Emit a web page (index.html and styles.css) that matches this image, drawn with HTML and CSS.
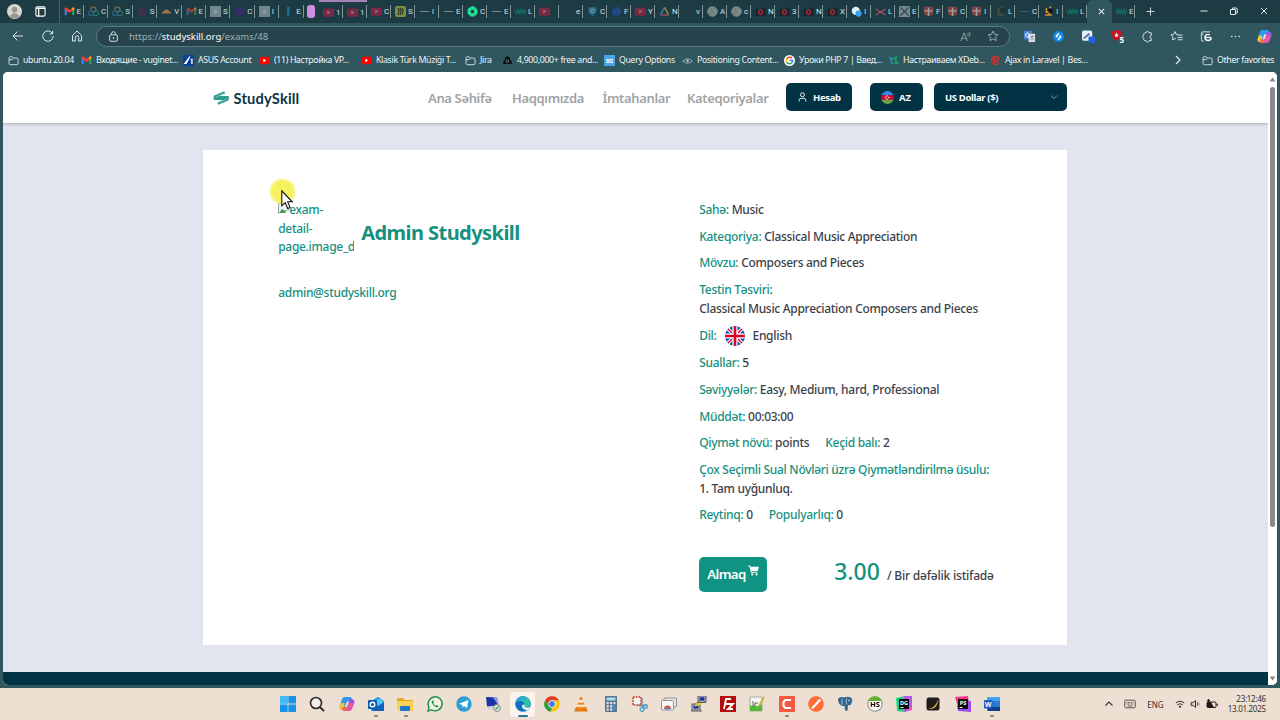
FILE: index.html
```
<!DOCTYPE html>
<html lang="az">
<head>
  <meta charset="UTF-8">
  <title>StudySkill</title>
  <link rel="stylesheet" href="styles.css">
</head>
<body>

  <!-- icons -->
  <svg class="sprite">
    <symbol id="folder" viewBox="0 0 16 16"><path d="M1.500 4.500a2 2 0 0 1 2-2h2.600l1.800 2h5a1.800 1.800 0 0 1 1.800 1.800v6a1.800 1.800 0 0 1-1.800 1.800H3.500a2 2 0 0 1-2-2zM1.500 6.800h4.800l1.600-2" fill="none" stroke="#dce8ea" stroke-width="1.300"/></symbol>
    <symbol id="gmail" viewBox="0 0 16 16"><path d="M1 13V4.500l3 2.200V13z" fill="#4285f4"/><path d="M12 13V6.700l3-2.200V13z" fill="#34a853"/><path d="M1 5V3.500C1 2 2.800 1.800 4 2.600l4 3.200 4-3.200c1.200-.8 3-.6 3 .9V5l-7 5.200z" fill="#ea4335"/><path d="M12 6.700V2.600c1.500-1 3-.4 3 1.200v.8z" fill="#fbbc04"/></symbol>
    <symbol id="youtube" viewBox="0 0 16 16"><rect x="0" y="2.500" width="16" height="11" rx="3" fill="#f00"/><path d="M6.300 5.500v5l4.200-2.500z" fill="#fff"/></symbol>
    <symbol id="yt-dim" viewBox="0 0 16 16"><rect x="0" y="2" width="16" height="12" rx="2.500" fill="#bb1c4a"/><path d="M6.300 5.500v5l4.200-2.500z" fill="#e7a3b5"/></symbol>
    <symbol id="rings" viewBox="0 0 16 16"><g fill="none" stroke-width="1.700"><circle cx="8" cy="5" r="3.600" stroke="#c4933c"/><circle cx="4.500" cy="10.500" r="3.600" stroke="#2f86a8"/><circle cx="11.500" cy="10.500" r="3.600" stroke="#2a9a8c"/></g></symbol>
    <symbol id="slack" viewBox="0 0 16 16"><path d="M11 3H6a2.500 2.500 0 0 0 0 5h4a2.500 2.500 0 0 1 0 5H4" fill="none" stroke="#7d1c60" stroke-width="2.600"/></symbol>
    <symbol id="cloud" viewBox="0 0 16 16"><path d="M1 11c0-3 2-3 3-3 1-4 7-4 8 0 2 0 3 1 3 3z" fill="#f5a04a"/></symbol>
    <symbol id="square" viewBox="0 0 16 16"><rect width="16" height="16" fill="#a9b8bc"/><path d="M5 8h6M8 5v6" stroke="#dfe6e8" stroke-width="2"/></symbol>
    <symbol id="cross" viewBox="0 0 16 16"><rect width="16" height="16" fill="#b3bdc0"/><path d="M2 2l12 12M14 2L2 14" stroke="#3a4c50" stroke-width="2"/></symbol>
    <symbol id="purple" viewBox="0 0 16 16"><rect x="1" y="3" width="14" height="10" fill="#4c2386"/></symbol>
    <symbol id="bar" viewBox="0 0 16 16"><path d="M6 1h4l-1 14H6z" fill="#1e8fc0"/></symbol>
    <symbol id="dash" viewBox="0 0 16 16"><path d="M1 8h14" stroke="#b3c4c8" stroke-width="1.500"/></symbol>
    <symbol id="miro" viewBox="0 0 16 16"><rect width="16" height="16" rx="3" fill="#c5c442"/><path d="M4 3l2 4-2 6M7 3l2 4-2 6M10 3l2 4-2 6" fill="none" stroke="#1e2d18" stroke-width="1.600"/></symbol>
    <symbol id="flower" viewBox="0 0 16 16"><circle cx="8" cy="8" r="5" fill="none" stroke="#1fe39a" stroke-width="5" stroke-dasharray="5 .3"/></symbol>
    <symbol id="wave" viewBox="0 0 16 16"><path d="M0 5l2 6 2-6 2 6 2-6 2 6 2-6 2 6 2-6" fill="none" stroke="#148a78" stroke-width="2"/></symbol>
    <symbol id="shield" viewBox="0 0 16 16"><path d="M2 2l6-1 6 1v7l-6 6-6-6z" fill="#2c86b5"/><circle cx="8" cy="7" r="2.600" fill="none" stroke="#c2e2f2" stroke-width="1.500"/></symbol>
    <symbol id="blob" viewBox="0 0 16 16"><circle cx="8" cy="8" r="7" fill="#1e4ea6"/><path d="M4 10c2-5 6-5 8 0" stroke="#3a6fc4" fill="none" stroke-width="1.500"/></symbol>
    <symbol id="drive" viewBox="0 0 16 16"><path d="M8 2L2 13" stroke="#4f9ee0" stroke-width="2.400"/><path d="M8 2l6 11" stroke="#e0b43c" stroke-width="2.400"/><path d="M2 13h12" stroke="#d05a6e" stroke-width="2.400"/></symbol>
    <symbol id="gpt" viewBox="0 0 16 16"><circle cx="8" cy="8" r="6.800" fill="#9aa39a" stroke="#e9eee0" stroke-width="1.400"/><circle cx="8" cy="8" r="3.500" fill="none" stroke="#fff" stroke-width="1.400" stroke-dasharray="2.500 1"/></symbol>
    <symbol id="camera" viewBox="0 0 16 16"><path d="M1 5h8l4-3 1 3h1v9H1z" fill="#14100f"/><circle cx="8" cy="9" r="3" fill="none" stroke="#ff2a44" stroke-width="2"/></symbol>
    <symbol id="drops" viewBox="0 0 16 16"><circle cx="7" cy="7" r="6" fill="#dff0fa"/><circle cx="11" cy="11" r="4.500" fill="#3aa0ea"/></symbol>
    <symbol id="redx" viewBox="0 0 16 16"><path d="M1 4l7 5 7-5M1 13l7-5 7 5" fill="none" stroke="#ff5f78" stroke-width="1.800"/></symbol>
    <symbol id="crest" viewBox="0 0 16 16"><path d="M1 1h14v8c0 4-4 5-7 6-3-1-7-2-7-6z" fill="#c4483e"/><path d="M8 2v12M2 7h12" stroke="#f2e6df" stroke-width="2"/></symbol>
    <symbol id="stack" viewBox="0 0 16 16"><path d="M3 13h10M5 3v6h4v4M9 2h3" fill="none" stroke="#de8d2e" stroke-width="2.200"/><rect x="8" y="4" width="6" height="6" fill="#151515"/></symbol>
    <symbol id="blank" viewBox="0 0 16 16"></symbol>
    <symbol id="google" viewBox="0 0 16 16"><circle cx="8" cy="8" r="8" fill="#fff"/><g fill="none" stroke-width="2.200"><path d="M11.500 4.800A4.700 4.700 0 0 0 4 5.500" stroke="#ea4335"/><path d="M4 5.500a4.700 4.700 0 0 0 0 5" stroke="#fbbc05"/><path d="M4 10.500a4.700 4.700 0 0 0 7 1" stroke="#34a853"/><path d="M8 8h4.700a4.700 4.700 0 0 1-1.700 3.500" stroke="#4285f4"/></g></symbol>
    <symbol id="copilot" viewBox="0 0 16 16"><path d="M5.500 1H11q1.500 0 2 2l.5 2H10L7 12q-.8 2-2.500 2H3q-3 0-2.300-4L3 3q.7-2 2.500-2z" fill="#2f9be8"/><path d="M2 7h3.500l-.5 7q-4 1-4.500-3z" fill="#f2c43a"/><path d="M10.500 15H5q-1.500 0-2-2h3L9 5q.8-1.500 2.500-1.500H13q3 0 2.300 4L13 13q-.7 2-2.500 2z" fill="#e05aa8"/><path d="M9 5q.8-1.500 2.500-1.500H13q3 0 2.300 3.500H8.500z" fill="#8c5ce6"/><path d="M3.500 11H8l-1.500 4H5q-1.500 0-2-2z" fill="#f2703c"/><path d="M10 5.500L7.800 11H6L8 5.500z" fill="#f6ece8"/></symbol>
  </svg>

  <div class="browser">
    <div class="tabbar">
      <div class="profile">
        <svg viewBox="0 0 16 16"><circle cx="8" cy="8" r="8" fill="#d9d5d2"/><circle cx="8" cy="6" r="3" fill="#9a9492"/><path d="M3 13.500c1-5 9-5 10 0-3 2.400-7 2.400-10 0z" fill="#9a9492"/></svg>
      </div>
      <div class="workspace">
        <svg viewBox="0 0 12 12"><rect x="1" y="1" width="10" height="10" rx="1.500" fill="none" stroke="#fff" stroke-width="1.200"/><path d="M1 2.700h10M4 3v8" stroke="#fff" stroke-width="1.400"/></svg>
      </div>
      <div class="tabs first">
        <div class="tab bright"><svg><use href="#gmail"/></svg><span>E</span></div>
        <div class="tab"><svg><use href="#rings"/></svg><span>C</span></div>
        <div class="tab"><svg><use href="#rings"/></svg><span>S</span></div>
        <div class="tab"><svg><use href="#slack"/></svg><span>S</span></div>
        <div class="tab"><svg><use href="#cloud"/></svg><span>V</span></div>
        <div class="tab"><svg><use href="#gmail"/></svg><span>E</span></div>
        <div class="tab"><svg><use href="#square"/></svg><span>S</span></div>
        <div class="tab"><svg><use href="#purple"/></svg><span>C</span></div>
        <div class="tab"><svg><use href="#square"/></svg><span>I</span></div>
        <div class="tab"><svg><use href="#bar"/></svg><span>E</span></div>
      </div>
      <div class="group-pill"></div>
      <div class="tabs second">
        <div class="tab grouped"><svg><use href="#yt-dim"/></svg><span>1</span></div>
        <div class="tab grouped"><svg><use href="#yt-dim"/></svg><span>1</span></div>
        <div class="tab"><svg><use href="#yt-dim"/></svg><span>C</span></div>
        <div class="tab"><svg><use href="#miro"/></svg><span>S</span></div>
        <div class="tab"><svg><use href="#dash"/></svg><span>l</span></div>
        <div class="tab"><svg><use href="#dash"/></svg><span>E</span></div>
        <div class="tab bright"><svg><use href="#flower"/></svg><span>C</span></div>
        <div class="tab"><svg><use href="#dash"/></svg><span>E</span></div>
        <div class="tab"><svg><use href="#wave"/></svg><span>L</span></div>
        <div class="tab"><svg><use href="#yt-dim"/></svg><span></span></div>
        <div class="tab"><svg><use href="#blank"/></svg><span>e</span></div>
        <div class="tab"><svg><use href="#shield"/></svg><span>C</span></div>
        <div class="tab"><svg><use href="#blob"/></svg><span>F</span></div>
        <div class="tab"><svg><use href="#yt-dim"/></svg><span>Y</span></div>
        <div class="tab"><svg><use href="#drive"/></svg><span>N</span></div>
        <div class="tab"><svg><use href="#blank"/></svg><span>v</span></div>
        <div class="tab"><svg><use href="#gpt"/></svg><span>A</span></div>
        <div class="tab"><svg><use href="#gpt"/></svg><span>c</span></div>
        <div class="tab"><svg><use href="#camera"/></svg><span>N</span></div>
        <div class="tab"><svg><use href="#camera"/></svg><span>3</span></div>
        <div class="tab"><svg><use href="#camera"/></svg><span>N</span></div>
        <div class="tab"><svg><use href="#camera"/></svg><span>X</span></div>
        <div class="tab bright"><svg><use href="#drops"/></svg><span>I</span></div>
        <div class="tab"><svg><use href="#redx"/></svg><span>L</span></div>
        <div class="tab"><svg><use href="#cross"/></svg><span>E</span></div>
        <div class="tab"><svg><use href="#crest"/></svg><span>F</span></div>
        <div class="tab"><svg><use href="#crest"/></svg><span>C</span></div>
        <div class="tab"><svg><use href="#crest"/></svg><span>I</span></div>
        <div class="tab faint"><svg><use href="#stack"/></svg><span>L</span></div>
        <div class="tab faint"><svg><use href="#dash"/></svg><span>C</span></div>
        <div class="tab bright"><svg><use href="#stack"/></svg><span>I</span></div>
        <div class="tab"><svg><use href="#wave"/></svg><span>L</span></div>
      </div>
      <div class="tab-active"><svg viewBox="0 0 10 10"><path d="M2 2l6 6M8 2l-6 6" stroke="#dfe9eb" stroke-width="1.200"/></svg></div>
      <div class="tabs last">
        <div class="tab"><svg><use href="#wave"/></svg><span>E</span></div>
      </div>
      <svg class="new-tab" viewBox="0 0 10 10"><path d="M5 .5v9M.5 5h9" stroke="#dfe9eb"/></svg>
      <div class="win-buttons">
        <svg viewBox="0 0 10 10"><path d="M1.500 5h7" stroke="#dfe9eb"/></svg>
        <svg viewBox="0 0 10 10"><path d="M1.500 3.500h5v5h-5zM3.500 3.500v-1.500h3.500q1.300 0 1.300 1.300V7H6.500" fill="none" stroke="#dfe9eb"/></svg>
        <svg viewBox="0 0 10 10"><path d="M2 2l6 6M8 2l-6 6" stroke="#dfe9eb"/></svg>
      </div>
    </div>

    <div class="toolbar">
      <div class="nav-buttons">
        <svg viewBox="0 0 12 12"><path d="M11 6H1M5.500 1.500L1 6l4.500 4.500" fill="none" stroke="#dfe9eb"/></svg>
        <svg viewBox="0 0 12 12"><path d="M10.500 3.500A5.200 5.200 0 1 0 11.200 6M10.700 .8v3h-3" fill="none" stroke="#dfe9eb"/></svg>
        <svg viewBox="0 0 12 12"><path d="M1.500 5.500L6 1l4.500 4.500V11H7.700V7.500a1.700 1.700 0 0 0-3.400 0V11H1.500z" fill="none" stroke="#dfe9eb"/></svg>
      </div>
      <div class="address">
        <svg class="lock" viewBox="0 0 12 12"><rect x="1.800" y="4.200" width="8.400" height="7" rx="1.300" fill="none" stroke="#dfe9eb"/><path d="M3.800 4V3a2.200 2.200 0 0 1 4.400 0v1" fill="none" stroke="#dfe9eb"/><circle cx="6" cy="7.700" r=".9" fill="#dfe9eb"/></svg>
        <span class="url">https://<b>studyskill.org</b>/exams/48</span>
        <svg class="read" viewBox="0 0 12 12"><path d="M.8 11L4.500 2l3.700 9M2.200 8h4.600M8.300 2.500q1.200 1.200 0 3M10 1.200q2.200 2.500 0 5" fill="none" stroke="#93a9ae"/></svg>
        <svg class="star" viewBox="0 0 12 12"><path d="M6 1l1.500 3.300 3.500.4-2.600 2.400.7 3.500L6 8.900l-3.100 1.700.7-3.500L1 4.700l3.500-.4z" fill="none" stroke="#93a9ae"/></svg>
      </div>
      <div class="extensions">
        <svg viewBox="0 0 14 14"><rect x="1" y="1" width="8.500" height="9" fill="#4b83e0"/><rect x="6" y="4" width="7" height="9" fill="#d9dfe4"/><path d="M6.500 4A2.200 2.200 0 1 0 7 6H5" fill="none" stroke="#fff"/><path d="M8 7h4M10 6v1q0 2-2 4M9 8l3 3" fill="none" stroke="#6483a5" stroke-width=".8"/></svg>
        <svg viewBox="0 0 14 14"><circle cx="7" cy="7" r="5.800" fill="#1389f2"/><path d="M7.500 3.500L5 6q-1 1 .5 1.300l1 .2M6.500 10.500L9 8q1-1-.5-1.300l-1-.2" fill="none" stroke="#fff" stroke-width="1.400"/></svg>
        <svg viewBox="0 0 14 14"><rect x="0" y=".5" width="11" height="11" rx="2" fill="#e7eef5"/><path d="M2 9l6-5" stroke="#4c6ea6" stroke-width="2"/><rect x="7" y="7" width="7" height="7" rx="1" fill="#1f62dc"/></svg>
        <svg viewBox="0 0 14 14"><path d="M1 1.500L6 0l5 1.500V6q-1 4-5 5.500Q2 10 1 6z" fill="#c91320"/><path d="M6 3v4M4.700 4.500v2.200h2.600V4.500" stroke="#fff" fill="none"/></svg>
        <svg viewBox="0 0 14 14"><path d="M4 3h1.500a1.500 1.500 0 0 1 3 0H11v3a1.400 1.400 0 0 0 0 2.800V11.500H8.500a1.500 1.500 0 0 1-3 0H4l-1-1V8.800L2 8V6l1-.8V4z" fill="none" stroke="#dfe9eb"/></svg>
        <svg class="sep" viewBox="0 0 14 14"><path d="M9 5l-2.200-.3L5.500 1.700 4.200 4.700 1 5.200l2.300 2.200-.6 3.300 2.800-1.500 1 .5M8.500 5.500h5M8 8h5.500M8.500 10.500h5" fill="none" stroke="#dfe9eb"/></svg>
        <svg viewBox="0 0 14 14"><path d="M4 12H3a1.500 1.500 0 0 1-1.500-1.500v-7A1.500 1.500 0 0 1 3 2h8M2 4.500h2" fill="none" stroke="#dfe9eb"/><circle cx="8.700" cy="8" r="3.300" fill="none" stroke="#fff" stroke-width="1.500" stroke-dasharray="17 4"/><path d="M6 8h5.500" stroke="#fff" stroke-width="1.300"/></svg>
        <svg viewBox="0 0 14 14"><circle cx="3" cy="7" r=".9" fill="#dfe9eb"/><circle cx="7" cy="7" r=".9" fill="#dfe9eb"/><circle cx="11" cy="7" r=".9" fill="#dfe9eb"/></svg>
        <svg class="copilot"><use href="#copilot"/></svg>
        <span class="count">5</span>
      </div>
    </div>

    <div class="bookmarks">
      <div class="bm"><svg><use href="#folder"/></svg>ubuntu 20.04</div>
      <div class="bm"><svg><use href="#gmail"/></svg>Входящие - vuginet...</div>
      <div class="bm"><svg viewBox="0 0 16 16"><rect width="16" height="16" fill="#07419b"/><path d="M1 13L9 2h2L5 13zM10 6l4-1v8h-2V7z" fill="#fff"/></svg>ASUS Account</div>
      <div class="bm"><svg><use href="#youtube"/></svg>(11) Настройка VP...</div>
      <div class="bm"><svg><use href="#youtube"/></svg>Klasik Türk Müziği T...</div>
      <div class="bm"><svg><use href="#folder"/></svg>Jira</div>
      <div class="bm"><svg viewBox="0 0 16 16"><path d="M2 13q-1-4 2-6 0-5 4-5t4 5q3 2 2 6z" fill="#071012"/><circle cx="8" cy="9" r="2" fill="none" stroke="#8ba0a5"/></svg>4,900,000+ free and...</div>
      <div class="bm"><svg viewBox="0 0 16 16"><rect width="16" height="16" fill="#4aa3e8"/><text x="8" y="11" class="biz">BIZ</text></svg>Query Options</div>
      <div class="bm"><svg viewBox="0 0 16 16"><path d="M1 9q7-7 14 0-7 6-14 0z" fill="none" stroke="#aebfc3" stroke-width="1.200"/><circle cx="8" cy="8.500" r="2" fill="#aebfc3"/></svg>Positioning Content...</div>
      <div class="bm"><svg><use href="#google"/></svg>Уроки PHP 7 | Введ...</div>
      <div class="bm"><svg viewBox="0 0 16 16"><path d="M3 4l4 2 5-3-1 5 3 4-5-1-4 2V8z" fill="none" stroke="#18a66c" stroke-width="1.800"/><path d="M3 4l2 4v5" fill="none" stroke="#2b7fe0" stroke-width="1.800"/></svg>Настраиваем XDeb...</div>
      <div class="bm"><svg viewBox="0 0 16 16"><path d="M13 6Q12 1 7 2 1 4 3 10q3 6 10 2M13 6q-2 5-7 3 0-4 3-4" fill="none" stroke="#e0322a" stroke-width="2"/></svg>Ajax in Laravel | Bes...</div>
      <svg class="more" viewBox="0 0 10 10"><path d="M3 1l4 4-4 4" fill="none" stroke="#dfe9eb" stroke-width="1.200"/></svg>
      <div class="bm other"><svg><use href="#folder"/></svg>Other favorites</div>
    </div>

    <div class="viewport">
      <div class="page">
        <header class="header">
          <div class="logo">
            <svg viewBox="0 0 17 14"><path d="M12 1.300L2 5.500v2.400h11.500M5 12.700l10-4.200V6.100H3.500" fill="none" stroke="#2f9b8a" stroke-width="2.500"/><path d="M11 2.200L3 6M6 11.800l8-3.800" fill="none" stroke="#a9d8d0" stroke-width=".6"/></svg>
            <span>StudySkill</span>
          </div>
          <nav class="menu">
            <a>Ana Səhifə</a>
            <a>Haqqımızda</a>
            <a>İmtahanlar</a>
            <a>Kateqoriyalar</a>
          </nav>
          <div class="actions">
            <div class="btn account">
              <svg viewBox="0 0 10 11"><circle cx="5" cy="3" r="2.200" fill="none" stroke="#fff"/><path d="M1.300 10.500V9.300Q1.300 7 3.500 7h3q2.200 0 2.200 2.300v1.200" fill="none" stroke="#fff"/></svg>
              Hesab
            </div>
            <div class="btn lang">
              <svg viewBox="0 0 14 14"><clipPath id="az"><circle cx="7" cy="7" r="7"/></clipPath><g clip-path="url(#az)"><path d="M0 0h14v4.700H0z" fill="#338af3"/><path d="M0 4.700h14v4.600H0z" fill="#d80027"/><path d="M0 9.300h14V14H0z" fill="#6da544"/></g><path d="M7.800 5.700a1.800 1.800 0 1 0 0 2.600" fill="none" stroke="#fff" stroke-width=".8"/><circle cx="8.600" cy="7" r=".8" fill="#fff"/></svg>
              AZ
            </div>
            <div class="btn currency">
              US Dollar ($)
              <svg viewBox="0 0 8 8"><path d="M1 2.500l3 3 3-3" fill="none" stroke="#8ba1aa" stroke-width=".9"/></svg>
            </div>
          </div>
        </header>

        <main class="content">
          <section class="card">
            <div class="author">
              <div class="author-top">
                <div class="avatar">
                  <svg viewBox="0 0 11 11"><path d="M.5 10.500V.5h7l3 3v4" fill="#eef3f6" stroke="#9aa7a7"/><path d="M1 10l3-4 3 2 3-2-3 4z" fill="#4c9a55"/></svg>exam-detail-page.image_d
                </div>
                <h1>Admin Studyskill</h1>
              </div>
              <div class="email">admin@studyskill.org</div>
            </div>

            <div class="details">
              <p><b>Sahə:</b> Music</p>
              <p><b>Kateqoriya:</b> Classical Music Appreciation</p>
              <p><b>Mövzu:</b> Composers and Pieces</p>
              <p><b>Testin Təsviri:</b><br>Classical Music Appreciation Composers and Pieces</p>
              <p class="language"><b>Dil:</b>
                <svg viewBox="0 0 20 20"><clipPath id="uk"><circle cx="10" cy="10" r="10"/></clipPath><g clip-path="url(#uk)"><path d="M0 0h20v20H0z" fill="#0052b4"/><path d="M0 0l20 20M20 0L0 20" stroke="#fff" stroke-width="3.600"/><path d="M0 0l20 20M20 0L0 20" stroke="#d80027" stroke-width="1.300"/><path d="M10 0v20M0 10h20" stroke="#fff" stroke-width="5.200"/><path d="M10 0v20M0 10h20" stroke="#d80027" stroke-width="2.600"/></g></svg>
                English</p>
              <p><b>Suallar:</b> 5</p>
              <p><b>Səviyyələr:</b> Easy, Medium, hard, Professional</p>
              <p><b>Müddət:</b> 00:03:00</p>
              <p class="pair"><span><b>Qiymət növü:</b> points</span><span><b>Keçid balı:</b> 2</span></p>
              <p><b>Çox Seçimli Sual Növləri üzrə Qiymətləndirilmə üsulu:</b><br>1. Tam uyğunluq.</p>
              <p class="pair"><span><b>Reytinq:</b> 0</span><span><b>Populyarlıq:</b> 0</span></p>
              <div class="buy">
                <div class="buy-btn">Almaq
                  <svg viewBox="0 0 12 12"><path d="M0 1h2l1.800 7H10" fill="none" stroke="#fff" stroke-width="1.100"/><path d="M2.500 1.800H12L10.600 6.500H3.800z" fill="#fff"/><circle cx="4.600" cy="10.300" r="1.200" fill="#fff"/><circle cx="9.400" cy="10.300" r="1.200" fill="#fff"/></svg>
                </div>
                <div class="price"><strong>3.00</strong><span>/ Bir dəfəlik istifadə</span></div>
              </div>
            </div>
          </section>
        </main>
        <footer class="footer"></footer>
      </div>
      <div class="scrollbar">
        <svg viewBox="0 0 8 6"><path d="M4 0.500L7.500 5.500H.5z" fill="#858585"/></svg>
        <div class="thumb"></div>
        <svg viewBox="0 0 8 6"><path d="M4 5.500L7.500 .5H.5z" fill="#858585"/></svg>
      </div>
    </div>
  </div>

  <div class="taskbar">
    <div class="apps">
      <div class="app"><svg viewBox="0 0 16 16"><path d="M0 0h7.600v7.600H0zM8.400 0H16v7.600H8.400zM0 8.400h7.600V16H0zM8.400 8.400H16V16H8.400z" fill="#1593e6"/><path d="M0 0h7.600v7.600H0z" fill="#45b9f5"/></svg></div>
      <div class="app"><svg viewBox="0 0 16 16"><circle cx="7" cy="7" r="5.500" fill="#f2ece6" stroke="#2b2725" stroke-width="1.600"/><path d="M11 11l4 4.200" stroke="#2b2725" stroke-width="1.900"/></svg></div>
      <div class="app"><svg><use href="#copilot"/></svg></div>
      <div class="app running"><svg viewBox="0 0 16 16"><path d="M3 5l7-4 6 4v9H3z" fill="#1490df"/><path d="M5 4l7-1 4 3-5 4z" fill="#50c8f5"/><path d="M3 15l13-9v9z" fill="#0f62b8"/><rect x="0" y="4" width="9" height="9" rx="1" fill="#0a5cb0"/><circle cx="4.500" cy="8.500" r="2.300" fill="none" stroke="#fff" stroke-width="1.400"/></svg></div>
      <div class="app running"><svg viewBox="0 0 16 16"><path d="M0 2h6l2 2h8v10H0z" fill="#e8a91d"/><path d="M0 5h16v10H0z" fill="#fcd052"/><rect x="3" y="10" width="10" height="5" rx="1" fill="#1d78c9"/></svg></div>
      <div class="app"><svg viewBox="0 0 16 16"><path d="M1 15l1-3.800a7 7 0 1 1 2.700 2.700z" fill="#f2efe9" stroke="#24914a" stroke-width="1.500"/><path d="M5.500 4.500q-1.500 1-.3 3 1.500 3 4.300 4 2 0 2-1.700L9.700 9l-1 .9Q7 9 6.300 7.500l.8-.9-.7-2z" fill="#24914a"/></svg></div>
      <div class="app"><svg viewBox="0 0 16 16"><circle cx="8" cy="8" r="7.700" fill="#2d9fd8"/><path d="M3 7.800L12.500 4 11 12.200 8 10l-1.500 1.500L6.300 9z" fill="#fff"/></svg></div>
      <div class="app"><svg viewBox="0 0 16 16"><path d="M1 1l11 .5 1.500 8L2 10.500z" fill="#1c32a8"/><path d="M8 1.300l4 .2 1.500 8z" fill="#8fa8ee"/><path d="M3 11h7v3H3z" fill="#d5d3cf"/><circle cx="12" cy="12" r="3.500" fill="#dedede" stroke="#8d8d8d"/><path d="M10.500 13.500l3-3" stroke="#4b9b53" stroke-width="1.300"/></svg></div>
      <div class="app active"><svg viewBox="0 0 16 16"><circle cx="8" cy="8" r="7.800" fill="#0f6fc4"/><path d="M.5 7Q1.500 0 8.500 .2 15 .8 15.800 7q0 4-4.300 4Q8 10.700 9.500 8.500 9 5 5 5 2 5 .5 7z" fill="#30c2a4"/><path d="M.5 7Q1.500 1 7 .3q4 0 5 3.500Q7 1 .5 7z" fill="#2aa6dc"/><path d="M9.500 8.500q-1 3 3 3 2 0 3-1-1 3-3.500 4Q6 13 7.200 9z" fill="#e9f5f3"/></svg></div>
      <div class="app"><svg viewBox="0 0 16 16"><circle cx="8" cy="8" r="7.800" fill="#f9c513"/><path d="M1.200 4.200A7.800 7.800 0 0 1 14.800 4.200H8L4.600 10z" fill="#e33b2e"/><path d="M1.200 4.200L4.700 10 8 11.800l-1.500 4A7.800 7.800 0 0 1 1.200 4.200z" fill="#2c9f4b"/><circle cx="8" cy="8" r="3.700" fill="#fff"/><circle cx="8" cy="8" r="2.900" fill="#3d7fe8"/></svg></div>
      <div class="app"><svg viewBox="0 0 16 16"><path d="M3 11h10l2 4.500H1z" fill="#e07b16"/><path d="M7 1h2l3.500 11q-4.500 2-9 0z" fill="#f08c1c"/><path d="M6 4h4l.8 2.500H5.200zM4.500 8.800h7l.6 2H3.900z" fill="#f5efe8"/></svg></div>
      <div class="app"><svg viewBox="0 0 16 16"><rect x="2" y="0" width="12" height="16" rx="1" fill="#56738a"/><rect x="3.500" y="1.500" width="9" height="3" fill="#a6e0f2"/><path d="M3.500 6h2.300v2.300H3.500zM7 6h2.300v2.300H7zM3.500 9.200h2.300v2.300H3.500zM7 9.200h2.300v2.300H7zM3.500 12.400h2.300v2.300H3.500zM7 12.400h2.300v2.300H7zM10.500 6h2v2.300h-2z" fill="#d9e4ea"/><path d="M10.500 9.200h2v5.500h-2z" fill="#3f93d0"/></svg></div>
      <div class="app"><svg viewBox="0 0 16 16"><rect x="1" y="1" width="8" height="8" fill="#f6f1ee" stroke="#c9372b" stroke-width="1.500" stroke-dasharray="1.700 1"/><path d="M10 2v9M6 9.500h9" stroke="#78909c" stroke-width="1.600"/><circle cx="10" cy="13.500" r="1.900" fill="none" stroke="#3ba0d8" stroke-width="1.200"/><circle cx="13.500" cy="10.500" r="1.900" fill="none" stroke="#3ba0d8" stroke-width="1.200"/></svg></div>
      <div class="app"><svg viewBox="0 0 16 16"><rect x="3" y="2" width="12.500" height="9" rx="1" fill="#e8eaeb" stroke="#8b8f92"/><rect x=".5" y="4.500" width="12" height="9.500" rx="1" fill="#f7f7f7" stroke="#8b8f92"/><path d="M3 13a3.500 3.500 0 0 1 7 0z" fill="#e24a35"/><circle cx="6.500" cy="12.500" r="1.500" fill="#4a8bea"/></svg></div>
      <div class="app"><svg viewBox="0 0 16 16"><rect x="7" y="0" width="8" height="6" fill="#c3c3bb" stroke="#595960"/><rect x="8.500" y="1.300" width="5" height="3.300" fill="#1b29b4"/><rect x="1" y="8" width="8" height="6" fill="#c3c3bb" stroke="#595960"/><rect x="2.500" y="9.300" width="5" height="3.300" fill="#1b29b4"/><path d="M12 6L7 7l2 1-5 2" fill="none" stroke="#f0d818" stroke-width="1.500"/><path d="M0 15h11M6 6.500h9" stroke="#595960"/></svg></div>
      <div class="app"><svg viewBox="0 0 16 16"><rect width="16" height="16" fill="#b50d0d"/><path d="M4 13L6 3h5M5 8h4M8 8h5l-5 5h5" fill="none" stroke="#fff" stroke-width="1.800"/></svg></div>
      <div class="app"><svg viewBox="0 0 16 16"><path d="M1 1h12v14H1z" fill="#f5f6f3" stroke="#a6aca3"/><path d="M1 9q6 3 12-1v7H1z" fill="#55b832"/><path d="M4 5v5h2V7h3" stroke="#58635a" fill="none"/><path d="M15 1l-5 9" stroke="#d5b22a" stroke-width="1.800"/></svg></div>
      <div class="app running"><svg viewBox="0 0 16 16"><rect width="16" height="16" rx="1" fill="#f2593d"/><path d="M12 4H6.500L4.500 6v4l2 2H12" fill="none" stroke="#fff" stroke-width="2.100"/></svg></div>
      <div class="app"><svg viewBox="0 0 16 16"><circle cx="8" cy="8" r="7.800" fill="#ff6c37"/><path d="M4 12.500L10.500 5.500" stroke="#fff" stroke-width="2"/><circle cx="11.300" cy="4.500" r="1.600" fill="#fff"/></svg></div>
      <div class="app"><svg viewBox="0 0 16 16"><path d="M1 3q2-3 6-1.500Q13-.5 15 3q1 3-2 6.500L11 9l-.3 5q-1 2-2.700 0L7.500 10 5 10Q1 8 1 3z" fill="#336791"/><path d="M5 3v6M10 2.500q-2 3 0 6" stroke="#d9e6ef" fill="none" stroke-width=".7"/><circle cx="12" cy="4.500" r=".7" fill="#fff"/></svg></div>
      <div class="app"><svg viewBox="0 0 16 16"><circle cx="8" cy="8" r="7.200" fill="#fff" stroke="#8b9790" stroke-width="1.200"/><path d="M1.500 5a7 7 0 0 1 13 0z" fill="#62b32e"/><text x="8" y="11" class="glyph hs">HS</text></svg></div>
      <div class="app"><svg viewBox="0 0 16 16"><path d="M0 2l9-2 7 4v9l-8 3-7-1z" fill="#23d18b"/><path d="M8 0h8v14l-8 2z" fill="#b558ea"/><path d="M10 14h6v-4z" fill="#ff45c8"/><rect x="3" y="3" width="10" height="10" fill="#0b0b0b"/><text x="8" y="8.500" class="glyph jb">DG</text><path d="M4.500 11.500h3" stroke="#fff"/></svg></div>
      <div class="app"><svg viewBox="0 0 16 16"><rect x="1.500" y="1.500" width="13" height="13" rx="2.500" fill="#1f1b1a"/><path d="M3 13q8-1 10-10 0 9-7 10z" fill="#f2c545"/></svg></div>
      <div class="app"><svg viewBox="0 0 16 16"><path d="M0 1l13-1 1 9-11 2z" fill="#ff318c"/><path d="M8 4l8 1v11L3 15l-1-5z" fill="#9a4ff0"/><rect x="3" y="3" width="10" height="10" fill="#0b0b0b"/><text x="8" y="8.500" class="glyph jb">PS</text><path d="M4.500 11.500h3" stroke="#fff"/></svg></div>
      <div class="app running"><svg viewBox="0 0 16 16"><rect x="3.500" y="1" width="12.500" height="14" rx="1" fill="#2b7cd3"/><path d="M3.500 1H16v4H3.500z" fill="#41a5ee"/><path d="M3.500 11H16v4H3.500z" fill="#103f91"/><rect x="0" y="4" width="8.500" height="8.500" rx="1" fill="#185abd"/><text x="4.200" y="10.500" class="glyph word">W</text></svg></div>
    </div>
    <div class="tray">
      <svg viewBox="0 0 10 10"><path d="M1.500 6.500L5 3l3.500 3.500" fill="none" stroke="#33302e" stroke-width="1.100"/></svg>
      <svg class="keyboard" viewBox="0 0 12 10"><rect x=".7" y="1.200" width="10.600" height="7.600" rx="1" fill="none" stroke="#5a5552"/><path d="M2.300 3.500h7.500M2.300 5h7.500" stroke="#5a5552" stroke-dasharray="1 .6"/><path d="M3.500 7h5" stroke="#5a5552"/></svg>
      <span class="eng">ENG</span>
      <svg class="wifi" viewBox="0 0 10 10"><path d="M.8 4Q5 .5 9.200 4M2.300 5.800q2.700-2.200 5.400 0" fill="none" stroke="#33302e"/><circle cx="5" cy="7.800" r="1.100" fill="#33302e"/></svg>
      <svg class="sound" viewBox="0 0 12 10"><path d="M1 3.700h2L5.500 1.500v7L3 6.300H1zM7 3.500q1.300 1.500 0 3" fill="none" stroke="#33302e"/><path d="M8.500 2.300q2.300 2.700 0 5.400" fill="none" stroke="#b3aaa4"/></svg>
      <svg class="battery" viewBox="0 0 12 10"><rect x="1" y="3" width="9" height="5.500" rx="1" fill="none" stroke="#1f1d1c"/><path d="M1 3h4l3 5.500H1z" fill="#1f1d1c"/><path d="M11.300 4.700v2M2.500 0v3M1 1.500h3" stroke="#1f1d1c" stroke-width="1.200"/></svg>
      <div class="clock">23:12:46<br>13.01.2025</div>
    </div>
  </div>

  <div class="click-dot"></div>
  <svg class="cursor" viewBox="0 0 12 20"><path d="M.8 .8v15l3.400-3.200L6.700 18.500l2.400-1.100-2.500-5.600h4.600z" fill="#fff" stroke="#111" stroke-width="1.100"/></svg>

</body>
</html>
```
FILE: styles.css
```
* {
  box-sizing: border-box;
}

body {
  margin: 0;
  width: 1280px;
  height: 720px;
  overflow: hidden;
  position: relative;
  font-family: "Noto Sans", "Open Sans", sans-serif;
  background: #30565f;
}

svg {
  display: block;
  flex: none;
}

.sprite {
  position: absolute;
  width: 0;
  height: 0;
}

.browser {
  display: flex;
  flex-direction: column;
  height: 688px;
  background: #30565f;
}

/* tabs */
.tabbar {
  display: flex;
  height: 23px;
  background: #1c3b43;
  flex: none;
}

.profile {
  width: 33px;
  padding: 4px 0 0 7px;
}

.profile svg {
  width: 15px;
  height: 15px;
}

.workspace {
  width: 25.5px;
  padding: 6px 0 0 1.5px;
}

.workspace svg {
  width: 11px;
  height: 11px;
}

.tabs {
  display: flex;
  align-items: center;
}

.first {
  width: 245px;
  border-left: 1px solid #48646a;
}

.second {
  width: 768px;
}

.last {
  width: 23px;
}

.tab {
  flex: 1;
  min-width: 0;
  height: 100%;
  display: flex;
  align-items: center;
  position: relative;
  gap: 2px;
  padding-left: 4px;
}

.tab::after {
  content: "";
  position: absolute;
  right: 0;
  top: 5px;
  width: 1px;
  height: 13px;
  background: #7f9498;
}

.tab svg {
  width: 11px;
  height: 11px;
  opacity: .6;
}

.tab.bright svg {
  opacity: 1;
}

.tab.faint svg {
  opacity: .25;
}

.tab span {
  color: #d5e0e2;
  font-family: Roboto, sans-serif;
  font-size: 8px;
  line-height: 14px;
}

.grouped {
  border-top: 2px solid #a583b4;
}

.grouped::after {
  top: 3px;
}

.group-pill {
  width: 8px;
  height: 13px;
  margin: 5px 4px 0 3.5px;
  border-radius: 3px;
  background: #d28fe0;
}

.tab-active {
  width: 25px;
  display: flex;
  align-items: center;
  justify-content: center;
  background: #30565f;
  border-radius: 6px 6px 0 0;
  padding-left: 3px;
}

.tab-active svg {
  width: 9px;
  height: 9px;
}

.new-tab {
  width: 9px;
  height: 9px;
  margin: 7px 0 0 11px;
}

.win-buttons {
  display: flex;
  gap: 20px;
  margin: 6px 0 0 44px;
}

.win-buttons svg {
  width: 10px;
  height: 10px;
}

/* toolbar */
.toolbar {
  display: flex;
  align-items: center;
  height: 26px;
  flex: none;
}

.nav-buttons {
  display: flex;
  gap: 17.5px;
  padding-left: 12px;
  width: 96px;
}

.nav-buttons svg {
  width: 12px;
  height: 12px;
}

.address {
  display: flex;
  align-items: center;
  width: 914px;
  height: 21px;
  flex: none;
  padding-left: 11px;
  border: 1px solid #5b7a80;
  border-radius: 11px;
  background: #27444d;
}

.lock {
  width: 11px;
  height: 11px;
}

.url {
  flex: 1;
  padding-left: 10px;
  color: #9fb2b6;
  font-size: 9.5px;
}

.url b {
  font-weight: 400;
  color: #fff;
}

.read {
  width: 11px;
  height: 11px;
  margin-right: 16px;
}

.star {
  width: 12px;
  height: 12px;
  margin-right: 10px;
}

.extensions {
  display: flex;
  align-items: center;
  gap: 16.5px;
  position: relative;
  margin-left: 12.5px;
}

.extensions svg {
  width: 13px;
  height: 13px;
}

.extensions .sep {
  overflow: visible;
}

.extensions .copilot {
  width: 15px;
  height: 15px;
  margin-left: -2px;
}

.count {
  position: absolute;
  left: 97px;
  top: 5px;
  color: #fff;
  font-size: 8px;
  line-height: 11px;
  font-weight: 700;
}

/* bookmarks */
.bookmarks {
  display: grid;
  grid-template-columns: 73px 102px 76px 102px 104px 37px 102px 78px 102px 104px 102px 183px 29px 72px;
  align-items: center;
  height: 23px;
  padding: 0 0 1px 8px;
  flex: none;
}

.bm {
  display: flex;
  align-items: center;
  gap: 4px;
  color: #f0f5f6;
  font-size: 8.8px;
  line-height: 14px;
  letter-spacing: -.35px;
  white-space: nowrap;
}

.bm svg {
  width: 11px;
  height: 11px;
}

.biz {
  font-size: 7px;
  font-weight: 700;
  text-anchor: middle;
  fill: #fff;
}

.more {
  width: 10px;
  height: 10px;
}

/* page */
.viewport {
  display: flex;
  width: 1274px;
  height: 613px;
  margin-left: 3px;
  background: #fff;
  border-radius: 5px;
  overflow: hidden;
}

.page {
  display: flex;
  flex-direction: column;
  width: 1264.5px;
  background: #e2e5ef;
}

.header {
  display: flex;
  align-items: center;
  height: 51px;
  padding: 0 0 1px 210px;
  background: #fff;
  box-shadow: 0 1px 3px rgba(0, 0, 0, .25);
  flex: none;
}

.logo {
  display: flex;
  align-items: center;
  gap: 4px;
  width: 215px;
  padding-top: 1px;
  color: #0c3444;
  font-family: Lato, sans-serif;
  font-size: 14.7px;
  font-weight: 700;
  letter-spacing: .15px;
}

.logo svg {
  width: 16.5px;
  height: 14px;
}

.menu {
  display: grid;
  grid-template-columns: 84px 90.5px 84.5px 99px;
  padding-top: 1px;
  color: #a0a3a6;
  font-size: 13px;
  font-weight: 600;
  letter-spacing: -.35px;
  white-space: nowrap;
}

.actions {
  display: flex;
}

.btn {
  display: flex;
  align-items: center;
  height: 28px;
  border-radius: 5px;
  background: #023345;
  color: #fff;
  font-size: 9.5px;
  font-weight: 700;
  letter-spacing: -.35px;
}

.account {
  width: 65.5px;
  padding-left: 12px;
  gap: 6px;
  margin-right: 18.5px;
}

.account svg {
  width: 9px;
  height: 10px;
}

.lang {
  width: 53px;
  padding-left: 11px;
  gap: 5px;
  margin-right: 11px;
  letter-spacing: 0;
}

.lang svg {
  width: 13px;
  height: 13px;
}

.currency {
  width: 133px;
  justify-content: space-between;
  padding: 0 9px 0 11px;
}

.currency svg {
  width: 8px;
  height: 8px;
}

.content {
  flex: 1;
  padding: 26.5px 0 0 200.4px;
}

.card {
  display: flex;
  width: 864px;
  height: 495.5px;
  padding: 51.5px 0 0 74.8px;
  background: #fff;
  font-size: 12px;
  font-weight: 500;
  line-height: 18.67px;
  letter-spacing: -.3px;
  color: #3b3f4a;
}

.author {
  width: 421px;
  color: #16907f;
}

.author-top {
  display: flex;
  align-items: center;
  gap: 7px;
  height: 64px;
}

.avatar {
  width: 76px;
  height: 64px;
  overflow: hidden;
}

.avatar svg {
  display: inline-block;
  width: 11px;
  height: 11px;
}

.author h1 {
  margin: 0;
  font-size: 20px;
  line-height: 28px;
  font-weight: 700;
  letter-spacing: -.55px;
}

.email {
  margin-top: 19px;
}

.details p {
  margin: 0 0 8px;
  white-space: nowrap;
}

.details b {
  font-weight: 500;
  color: #16907f;
}

.details .language {
  display: flex;
  align-items: center;
  gap: 8px;
  height: 20px;
}

.language svg {
  width: 20px;
  height: 20px;
}

.pair {
  display: flex;
  gap: 16px;
}

.buy {
  display: flex;
  align-items: center;
  padding-top: 23.5px;
}

.buy-btn {
  display: flex;
  align-items: center;
  gap: 2px;
  width: 68px;
  height: 35px;
  padding-left: 8px;
  border-radius: 5px;
  background: #109383;
  color: #fff;
  font-size: 13.3px;
  font-weight: 600;
  letter-spacing: -.6px;
}

.buy-btn svg {
  width: 11px;
  height: 11px;
  margin-bottom: 7px;
}

.price {
  display: flex;
  align-items: baseline;
  gap: 7px;
  margin-left: 67px;
  white-space: nowrap;
  font-size: 12px;
  letter-spacing: -.2px;
}

.price strong {
  color: #16907f;
  font-size: 23px;
  font-weight: 500;
  letter-spacing: 0;
}

.footer {
  height: 13px;
  background: #023345;
}

.scrollbar {
  display: flex;
  flex-direction: column;
  align-items: center;
  width: 9.5px;
  padding: 5px 0 4px;
  background: #fff;
}

.scrollbar svg {
  width: 7px;
  height: 5px;
}

.thumb {
  width: 5px;
  height: 440px;
  margin: 5px 0 auto;
  border-radius: 3px;
  background: #8a8a8a;
}

/* taskbar */
.taskbar {
  display: flex;
  height: 32px;
  padding-left: 273.5px;
  background: #eedfd3;
}

.apps {
  display: flex;
}

.app {
  position: relative;
  display: flex;
  justify-content: center;
  width: 29.33px;
  padding-top: 8px;
}

.app svg {
  position: relative;
  width: 16px;
  height: 16px;
}

.running::after {
  content: "";
  position: absolute;
  left: 13px;
  bottom: 3px;
  width: 4px;
  height: 2px;
  border-radius: 1px;
  background: #8b7f78;
}

.active::before {
  content: "";
  position: absolute;
  left: 2px;
  top: 4px;
  width: 25px;
  height: 25px;
  border-radius: 3px;
  background: #faf3ee;
}

.active::after {
  content: "";
  position: absolute;
  left: 10px;
  bottom: 3px;
  width: 10px;
  height: 2px;
  border-radius: 1px;
  background: #2b7597;
}

.glyph {
  text-anchor: middle;
  font-weight: 700;
}

.hs {
  font-size: 7.5px;
}

.jb {
  font-size: 5.5px;
  fill: #fff;
}

.word {
  font-size: 7px;
  fill: #fff;
}

.tray {
  display: flex;
  align-items: center;
  margin-left: 97px;
  color: #33302e;
  font-size: 8px;
}

.tray svg {
  width: 10px;
  height: 10px;
}

.tray .keyboard {
  width: 12px;
  margin-left: 10px;
}

.eng {
  width: 17px;
  margin: 0 10.5px 0 11.5px;
}

.tray .sound {
  width: 12px;
  margin-left: 5px;
}

.tray .battery {
  width: 12px;
  margin-left: 4px;
}

.clock {
  width: 44px;
  margin-left: 4px;
  text-align: right;
  line-height: 10.5px;
  letter-spacing: -.3px;
}

/* pointer */
.click-dot {
  position: absolute;
  left: 270px;
  top: 179px;
  width: 25px;
  height: 25px;
  border-radius: 50%;
  background: #f4f04e;
  opacity: .9;
  filter: blur(1px);
}

.cursor {
  position: absolute;
  left: 281px;
  top: 190px;
  width: 12px;
  height: 20px;
}
```
